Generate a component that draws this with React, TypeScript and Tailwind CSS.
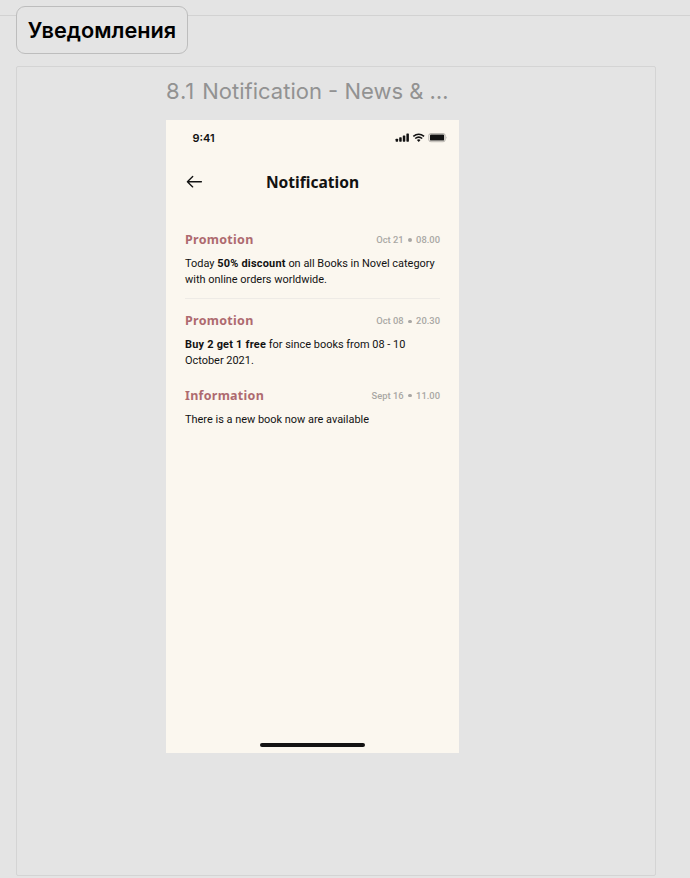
import type { ReactNode } from "react";

interface NoticeProps {
  title: string;
  day: string;
  time: string;
  children: ReactNode;
}

function Strong({ children }: { children: ReactNode }) {
  return <b className="tracking-[0.22px]">{children}</b>;
}

function Notice({ title, day, time, children }: NoticeProps) {
  return (
    <article>
      <div className="flex h-[18px] items-center justify-between">
        <h2 className="font-['Noto_Sans',sans-serif] text-[12.5px] font-bold leading-[18px] tracking-[0.28px] text-[#ae6a6f]">
          {title}
        </h2>
        <div className="flex items-center text-[9.375px] font-medium leading-[14px] text-[#a9a7a4]">
          <span>{day}</span>
          <span className="mx-[4.5px] size-[3.5px] rounded-full bg-[#a9a7a4]" />
          <span>{time}</span>
        </div>
      </div>
      <p className="mt-[7px] whitespace-nowrap text-[10.94px] leading-[15.63px] text-[#121212]">{children}</p>
    </article>
  );
}

function StatusIcons() {
  return (
    <svg width="52" height="10" viewBox="0 0 52 10" fill="#121212">
      <rect x="0.6" y="5.7" width="2.5" height="3" rx="0.6" />
      <rect x="4.2" y="4.3" width="2.5" height="4.4" rx="0.6" />
      <rect x="7.8" y="2.4" width="2.5" height="6.3" rx="0.6" />
      <rect x="11.4" y="0.5" width="2.5" height="8.2" rx="0.6" />
      <g fill="none" stroke="#121212" strokeWidth="1.6">
        <path d="M18.3 3.4 Q23.7 -0.9 29.1 3.4" />
        <path d="M20.2 5.5 Q23.7 2.6 27.2 5.5" />
      </g>
      <path d="M21.9 7 Q23.7 5.6 25.5 7 L23.7 8.9Z" />
      <rect x="33.8" y="0.5" width="16.4" height="8.2" rx="2" fill="none" stroke="#121212" strokeOpacity="0.35" strokeWidth="0.8" />
      <rect x="35" y="1.6" width="14.1" height="6" rx="0.9" />
      <path d="M51 3.3 Q51.9 4.6 51 5.9Z" opacity="0.4" />
    </svg>
  );
}

function Phone() {
  return (
    <main className="flex h-[633px] w-[293px] flex-col bg-[#fbf7ef] font-[Roboto,sans-serif] text-[#121212]">
      <div className="flex h-[36px] items-center justify-between pl-[26.5px] pr-[12px]">
        <span className="font-[Inter,sans-serif] text-[11px] font-semibold leading-[14px]">9:41</span>
        <StatusIcons />
      </div>
      <header className="grid h-[52px] grid-cols-[40px_1fr_40px] items-center">
        <svg className="ml-[20px]" width="17" height="14" viewBox="0 0 17 14" fill="none" stroke="#121212" strokeWidth="1.35" strokeLinecap="round" strokeLinejoin="round">
          <path d="M15.4 6.7H1.4M6.7 1.5L1.4 6.7L6.7 11.9" />
        </svg>
        <h1 className="-mt-px text-center font-['Noto_Sans',sans-serif] text-[15.6px] font-bold leading-[22px]">Notification</h1>
      </header>
      <section className="px-[19px] pt-[23px]">
        <Notice title="Promotion" day="Oct 21" time="08.00">
          Today <Strong>50% discount</Strong> on all Books in Novel category
          <br />
          with online orders worldwide.
        </Notice>
        <div className="mt-[11px] mb-[13px] h-px bg-[#eeebe6]" />
        <Notice title="Promotion" day="Oct 08" time="20.30">
          <Strong>Buy 2 get 1 free</Strong> for since books from 08 - 10
          <br />
          October 2021.
        </Notice>
        <div className="h-[18px]" />
        <Notice title="Information" day="Sept 16" time="11.00">
          There is a new book now are available
        </Notice>
      </section>
      <div className="mx-auto mt-auto mb-[6px] h-[4px] w-[105px] rounded-full bg-[#121212]" />
    </main>
  );
}

export default function App() {
  return (
    <div className="relative h-[878px] w-[690px] overflow-hidden bg-[#e4e4e4] pl-[16px] pt-[66px] font-[Inter,sans-serif]">
      <div className="absolute left-0 top-[15px] h-px w-full bg-[#d2d2d2]" />
      <div className="absolute left-[16px] top-[6px] flex h-[48px] w-[172px] items-center justify-center rounded-[9px] border border-[#bdbdbd] bg-[#e4e4e4] text-[21.7px] font-semibold leading-[28px] text-black">
        Уведомления
      </div>
      <section className="h-[810px] w-[640px] rounded-[2px] border border-[#d4d4d4] pl-[149px]">
        <div className="h-[53px] whitespace-pre pt-[10px] text-[22px] leading-[28px] text-[#929292]">
          <span className="tracking-[0.9px]">8.1 </span>
          <span>Notification - News &amp; …</span>
        </div>
        <Phone />
      </section>
    </div>
  );
}
